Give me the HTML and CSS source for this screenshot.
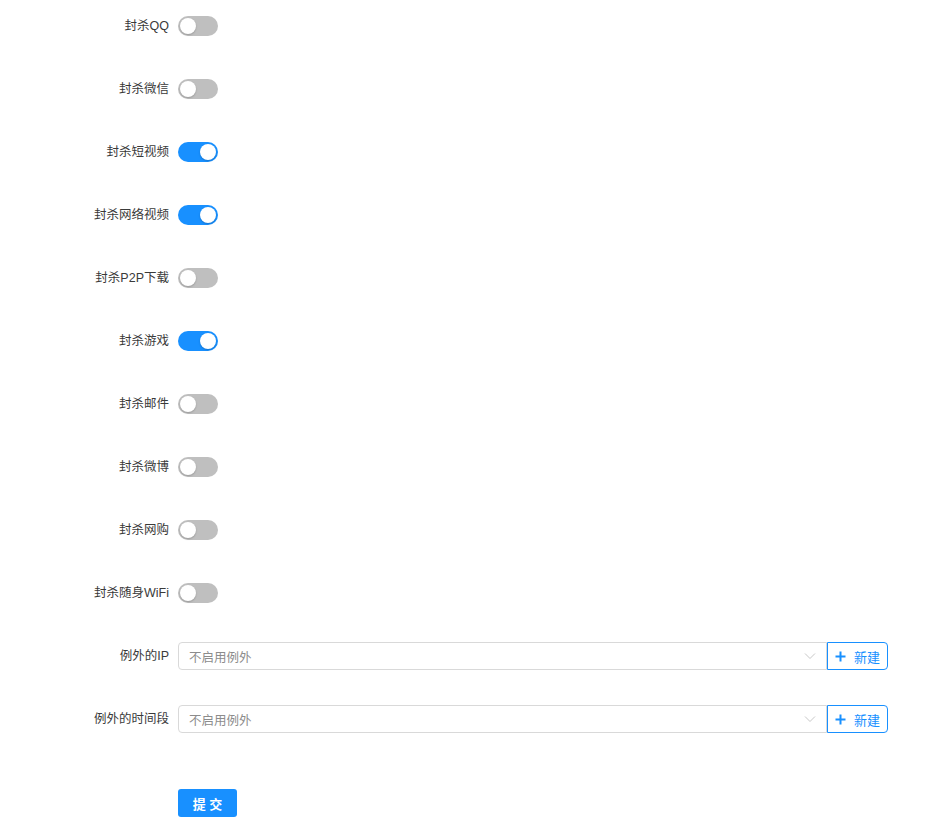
FILE: index.html
```html
<!DOCTYPE html>
<html lang="zh">
<head>
<meta charset="utf-8">
<title>封杀设置</title>
<link rel="stylesheet" href="styles.css">
</head>
<body>
<form class="form">
  <div class="row"><label class="label">封杀QQ</label><div class="control"><span class="switch"><span class="knob"></span></span></div></div>
  <div class="row"><label class="label">封杀微信</label><div class="control"><span class="switch"><span class="knob"></span></span></div></div>
  <div class="row"><label class="label">封杀短视频</label><div class="control"><span class="switch on"><span class="knob"></span></span></div></div>
  <div class="row"><label class="label">封杀网络视频</label><div class="control"><span class="switch on"><span class="knob"></span></span></div></div>
  <div class="row"><label class="label">封杀P2P下载</label><div class="control"><span class="switch"><span class="knob"></span></span></div></div>
  <div class="row"><label class="label">封杀游戏</label><div class="control"><span class="switch on"><span class="knob"></span></span></div></div>
  <div class="row"><label class="label">封杀邮件</label><div class="control"><span class="switch"><span class="knob"></span></span></div></div>
  <div class="row"><label class="label">封杀微博</label><div class="control"><span class="switch"><span class="knob"></span></span></div></div>
  <div class="row"><label class="label">封杀网购</label><div class="control"><span class="switch"><span class="knob"></span></span></div></div>
  <div class="row"><label class="label">封杀随身WiFi</label><div class="control"><span class="switch"><span class="knob"></span></span></div></div>
  <div class="row"><label class="label">例外的IP</label>
    <div class="control">
      <div class="select"><span class="placeholder">不启用例外</span>
        <svg class="arrow" width="12" height="8" viewBox="0 0 12 8"><path d="M1 1.5 L6 6.5 L11 1.5" fill="none" stroke="#c8c8c8" stroke-width="1"/></svg>
      </div>
      <button type="button" class="add"><svg width="11" height="11" viewBox="0 0 11 11"><path d="M5.5 0.5 V10.5 M0.5 5.5 H10.5" stroke="#1890ff" stroke-width="2"/></svg><span>新建</span></button>
    </div>
  </div>
  <div class="row"><label class="label">例外的时间段</label>
    <div class="control">
      <div class="select"><span class="placeholder">不启用例外</span>
        <svg class="arrow" width="12" height="8" viewBox="0 0 12 8"><path d="M1 1.5 L6 6.5 L11 1.5" fill="none" stroke="#c8c8c8" stroke-width="1"/></svg>
      </div>
      <button type="button" class="add"><svg width="11" height="11" viewBox="0 0 11 11"><path d="M5.5 0.5 V10.5 M0.5 5.5 H10.5" stroke="#1890ff" stroke-width="2"/></svg><span>新建</span></button>
    </div>
  </div>
  <div class="row submit-row"><span class="label"></span><div class="control"><button type="button" class="submit">提 交</button></div></div>
</form>
</body>
</html>
```

FILE: styles.css
```css
html, body {
  margin: 0;
  padding: 0;
  background: #fff;
}
body {
  font-family: "Liberation Sans", "Noto Sans CJK SC", sans-serif;
  font-size: 12.5px;
  color: #333;
}
.form {
  padding-top: 12px;
  width: 888px;
}
.row {
  display: flex;
  align-items: center;
  height: 28px;
  margin-bottom: 35px;
}
.label {
  width: 170px;
  flex: none;
  text-align: right;
  box-sizing: border-box;
  padding-right: 1px;
  color: #3a3a3a;
  font-size: 12.5px;
  line-height: 28px;
}
.control {
  margin-left: 8px;
  flex: 1;
  display: flex;
  align-items: center;
}
.switch {
  position: relative;
  display: inline-block;
  width: 40px;
  height: 20px;
  border-radius: 10px;
  background: #bfbfbf;
}
.switch.on {
  background: #1890ff;
}
.knob {
  position: absolute;
  top: 2px;
  left: 2px;
  width: 16px;
  height: 16px;
  border-radius: 50%;
  background: #fff;
  box-shadow: 0 1px 2px rgba(0, 0, 0, 0.2);
}
.switch.on .knob {
  left: 22px;
}
.select {
  width: 649px;
  height: 28px;
  box-sizing: border-box;
  border: 1px solid #d9d9d9;
  border-radius: 4px 0 0 4px;
  display: flex;
  align-items: center;
  justify-content: space-between;
  padding: 0 10px;
}
.placeholder {
  color: #8c8c8c;
  font-size: 12.5px;
}
.arrow {
  display: block;
}
.add {
  width: 61px;
  height: 28px;
  box-sizing: border-box;
  border: 1px solid #1890ff;
  border-radius: 0 4px 4px 0;
  background: #fff;
  color: #1890ff;
  font-family: "Liberation Sans", "Noto Sans CJK SC", sans-serif;
  font-size: 13px;
  display: flex;
  align-items: center;
  justify-content: center;
  gap: 8px;
  padding: 0;
  margin-left: 0;
}
.add svg {
  display: block;
}
.submit-row {
  margin-top: 56px;
}
.submit {
  width: 59px;
  height: 28px;
  border: none;
  border-radius: 3px;
  background: #1890ff;
  color: #fff;
  font-family: "Liberation Sans", "Noto Sans CJK SC", sans-serif;
  font-size: 13px;
  font-weight: bold;
  padding: 0;
}
```
